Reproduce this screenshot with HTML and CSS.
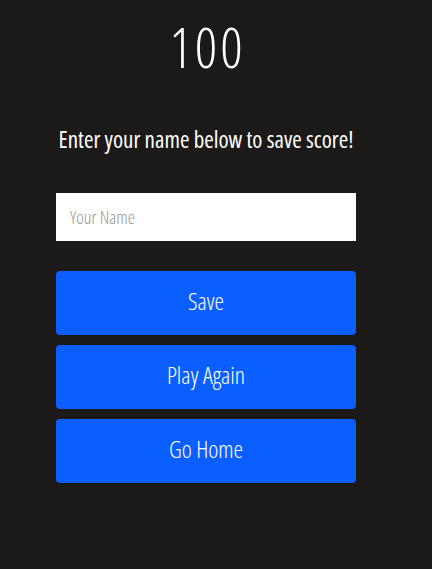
FILE: index.html
```html
<!DOCTYPE html>
<html>
<head>
<meta charset="utf-8">
<link rel="stylesheet" href="styles.css">
</head>
<body>
<div class="container">
  <h1 class="score">100</h1>
  <p class="prompt">Enter your name below to save score!</p>
  <form class="form">
    <input class="name-input" type="text" placeholder="Your Name">
    <button class="btn" type="button">Save</button>
    <button class="btn" type="button">Play Again</button>
    <button class="btn" type="button">Go Home</button>
  </form>
</div>
</body>
</html>
```

FILE: styles.css
```css
html, body {
  margin: 0;
  padding: 0;
  background: #1c1a19;
  height: 100%;
}
body {
  font-family: "Open Sans", sans-serif;
  font-stretch: 75%;
  color: #fff;
}
.container {
  width: 300px;
  margin-left: 56px;
  display: flex;
  flex-direction: column;
}
.score {
  margin: 20px 0 0;
  padding-left: 3px;
  font-family: "Open Sans", sans-serif;
  font-stretch: 75%;
  font-weight: 300;
  font-size: 55px;
  line-height: 54px;
  letter-spacing: 3px;
  text-align: center;
}
.prompt {
  margin: 52px 0 0;
  font-size: 23px;
  line-height: 26px;
  font-weight: 400;
  text-align: center;
  white-space: nowrap;
}
.form {
  margin-top: 41px;
  display: flex;
  flex-direction: column;
  gap: 10px;
}
.name-input {
  box-sizing: border-box;
  height: 48px;
  border: none;
  padding: 0 14px;
  font-family: inherit;
  font-stretch: 75%;
  font-weight: 300;
  font-size: 18px;
  margin-bottom: 20px;
  outline: none;
}
.name-input::placeholder {
  color: #959595;
}
.btn {
  height: 64px;
  border: none;
  border-radius: 4px;
  background: #0b5eff;
  color: #fff;
  font-family: inherit;
  font-stretch: 75%;
  font-weight: 300;
  font-size: 24px;
  padding: 0 0 5px;
}
```
